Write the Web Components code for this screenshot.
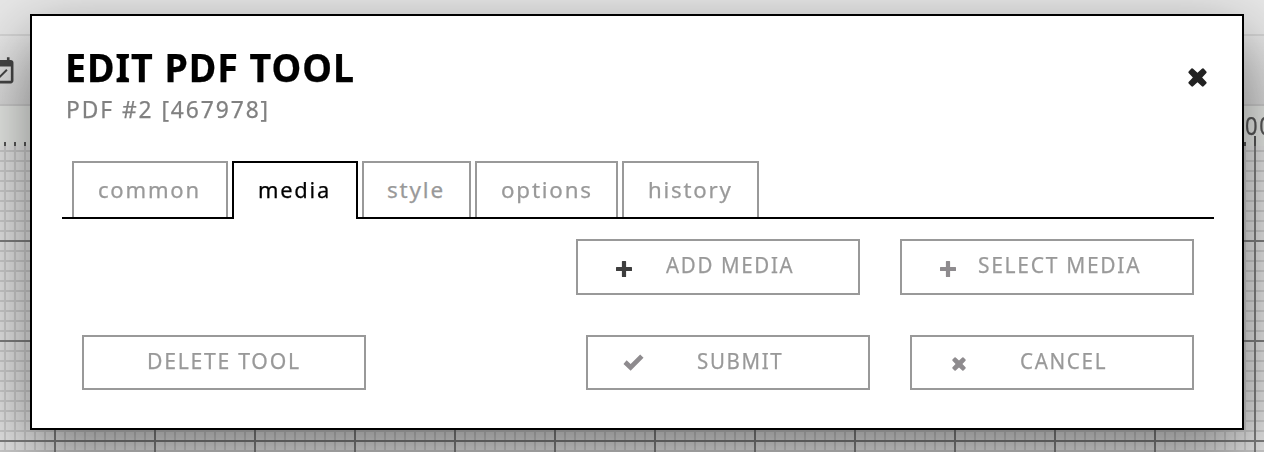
<!DOCTYPE html>
<html lang="en"><head><meta charset="utf-8"><title>Edit PDF tool</title>
<style>html,body{margin:0;height:452px;overflow:hidden;font-family:"Noto Sans","Open Sans",sans-serif}</style></head><body>
<editor-app></editor-app>
<script>
const define=(name,html,ready)=>customElements.define(name,class extends HTMLElement{
  constructor(){super();this.attachShadow({mode:'open'}).innerHTML=html}
  connectedCallback(){if(ready)ready.call(this,this.shadowRoot)}
});
// A single line condensed to a given advance width.
define('fit-text',`<style>:host{display:block;flex:none;white-space:nowrap}span{display:inline-block;transform-origin:0 50%;-webkit-text-stroke:.25px currentColor}</style><span><slot></slot></span>`,function(r){
  const w=+this.getAttribute('width'),s=r.querySelector('span');
  this.style.width=w+'px';
  s.style.transform=`scaleX(${w/s.offsetWidth})`;
});
define('tool-icon',`<style>:host{display:block;flex:none}svg{display:block;width:100%;height:100%;overflow:visible}:host([soft]) svg{filter:blur(.5px)}</style><svg fill="currentColor"></svg>`,function(r){
  const s=r.querySelector('svg'),icons={
    plus:['0 0 16 16','<path d="M5.9 .6Q5.9 0 6.5 0H9.5Q10.1 0 10.1 .6V5.9H15.4Q16 5.9 16 6.5V9.5Q16 10.1 15.4 10.1H10.1V15.4Q10.1 16 9.5 16H6.5Q5.9 16 5.9 15.4V10.1H.6Q0 10.1 0 9.5V6.5Q0 5.9 .6 5.9H5.9Z"/>'],
    cross:['0 0 18 18','<path d="M3.2.5Q4 0 4.8.6L9 4.6 13.2.6Q14 0 14.8.5L17.4 3.2Q18 4 17.4 4.8L13.4 9 17.4 13.2Q18 14 17.4 14.8L14.8 17.4Q14 18 13.2 17.4L9 13.4 4.8 17.4Q4 18 3.2 17.4L.6 14.8Q0 14 .6 13.2L4.6 9 .6 4.8Q0 4 .6 3.2Z"/>'],
    check:['0 0 22 17','<path d="M.5 10 3.8 6.2 8 10 18 .5 21.5 3.8 8 16.8Z"/>'],
    calendar:['0 0 24 24','<path d="M16.53 11.06 15.47 10l-4.88 4.88-2.12-2.12-1.06 1.06L10.59 17zM19 3h-1V1h-2v2H8V1H6v2H5c-1.1 0-2 .9-2 2v14c0 1.1.9 2 2 2h14c1.1 0 2-.9 2-2V5c0-1.1-.9-2-2-2zm0 16H5V8h14z"/>']};
  const i=icons[this.getAttribute('name')];s.setAttribute('viewBox',i[0]);s.setAttribute('preserveAspectRatio','none');s.innerHTML=i[1];
});
define('tool-tab',`<style>:host{display:block;box-sizing:border-box;height:56px;border:2px solid #999;border-bottom:0;padding:13px 0 0 24px;color:#999;font-size:22.5px;line-height:28px;letter-spacing:1.8px}
:host([active]){height:58px;border-color:#000;color:#000;background:#fff}</style><slot></slot>`);
define('tool-button',`<style>:host{display:flex;box-sizing:border-box;border:2px solid #999;color:#999;font-size:22px;line-height:24px;letter-spacing:1.8px;padding-top:11px;height:55px}</style><slot></slot>`);
define('tab-bar',`<style>:host{display:flex;gap:4px;height:58px;box-sizing:border-box;padding-left:10px;background:linear-gradient(#000,#000) 0 100%/100% 2px no-repeat}</style><slot></slot>`);
define('edit-dialog',`<style>
:host{display:block;box-sizing:border-box;width:1214px;height:416px;border:2px solid #000;background:#fff;box-shadow:0 22px 60px rgba(0,0,0,.45);padding:31px 28px 0 30px}
header{display:flex;justify-content:space-between;height:114px;padding-left:3px}
h1{margin:0 0 10px;font-size:39.5px;line-height:40px;letter-spacing:1px}
.sub{font-size:23.5px;line-height:24px;color:#808080;letter-spacing:2px;padding-left:.5px}
.close{width:19px;height:19px;color:#222;margin:20.5px 7.5px 0 0}
.row{display:flex;justify-content:flex-end;padding-right:20px;gap:40px}
.r1{margin-top:20px}.r2{margin-top:40px;padding-left:20px}
.r2 tool-button:first-child{margin-right:auto}
</style>
<header><div><h1><fit-text width="289.5">EDIT PDF TOOL</fit-text></h1><div class="sub"><fit-text width="204.5">PDF #2 [467978]</fit-text></div></div><tool-icon soft class="close" name="cross"></tool-icon></header>
<tab-bar>
<tool-tab style="width:156px"><fit-text width="103">common</fit-text></tool-tab>
<tool-tab active style="width:126px"><fit-text width="73">media</fit-text></tool-tab>
<tool-tab style="width:109px;padding-left:23px"><fit-text width="58">style</fit-text></tool-tab>
<tool-tab style="width:143px;padding-left:23.5px"><fit-text width="91.5">options</fit-text></tool-tab>
<tool-tab style="width:137px"><fit-text width="85">history</fit-text></tool-tab>
</tab-bar>
<div class="row r1">
<tool-button style="width:284px;height:56px"><tool-icon soft name="plus" style="width:16px;height:16px;margin:9px 34px 0 38px;color:#3e3e3e"></tool-icon><fit-text width="128.5">ADD MEDIA</fit-text></tool-button>
<tool-button style="width:294px;height:56px"><tool-icon soft name="plus" style="width:16px;height:16px;margin:9px 22px 0 38px;color:#8e8b8e"></tool-icon><fit-text width="163">SELECT MEDIA</fit-text></tool-button></div>
<div class="row r2">
<tool-button style="width:284px"><fit-text width="154" style="margin-left:62.5px">DELETE TOOL</fit-text></tool-button>
<tool-button style="width:284px"><tool-icon soft name="check" style="width:21px;height:17px;margin:6px 53px 0 35px;color:#8e8b8e"></tool-icon><fit-text width="86.5">SUBMIT</fit-text></tool-button>
<tool-button style="width:284px"><tool-icon soft name="cross" style="width:14px;height:14px;margin:9px 53.5px 0 40px;color:#8e8b8e"></tool-icon><fit-text width="87">CANCEL</fit-text></tool-button></div>`);
define('editor-canvas',`<style>
:host{display:block;height:452px;background:#e4e4e4}
.top{height:34px;background:#e7e7e7;border-bottom:2px solid #d4d4d4}
.bar{height:68px;background:linear-gradient(#e6e6e6,#d6d6d6);border-bottom:2px solid #c9c9c9;overflow:hidden}
.bar tool-icon{width:31.4px;height:31.4px;margin:20px 0 0 -14.5px;color:#444}
.ruler{display:flex;justify-content:flex-end;height:40px;position:relative;background:
 repeating-linear-gradient(90deg,#555 0 2.5px,transparent 2.5px 10px) -6px 100%/1400px 4.5px no-repeat,#e2e4e1}
.num{font-size:25px;line-height:39px;letter-spacing:2px;color:#555;width:19px;overflow:hidden}
.major{width:2px;height:10px;background:#555;position:absolute;left:1254px;bottom:0}
.grid{height:306px;background:
 repeating-linear-gradient(90deg,#7d7d7d 0 2px,transparent 2px 100px) -46px 0/1400px 100%,
 repeating-linear-gradient(#7d7d7d 0 2px,transparent 2px 100px) 0 -6px/100% 400px,
 repeating-linear-gradient(90deg,#c8c8c8 0 2px,transparent 2px 10px) -6px 0/1400px 100%,
 repeating-linear-gradient(#c8c8c8 0 2px,transparent 2px 10px) 0 4px/100% 400px,#e0e0e0}
</style><div class="top"></div><div class="bar"><tool-icon name="calendar"></tool-icon></div><div class="ruler"><div class="num"><fit-text width="29">00</fit-text></div><div class="major"></div></div><div class="grid"></div>`);
define('editor-app',`<style>:host{display:block;position:relative;width:1264px;height:452px;overflow:hidden}edit-dialog{position:absolute;left:30px;top:14px}</style><editor-canvas></editor-canvas><edit-dialog></edit-dialog>`);
</script></body></html>
